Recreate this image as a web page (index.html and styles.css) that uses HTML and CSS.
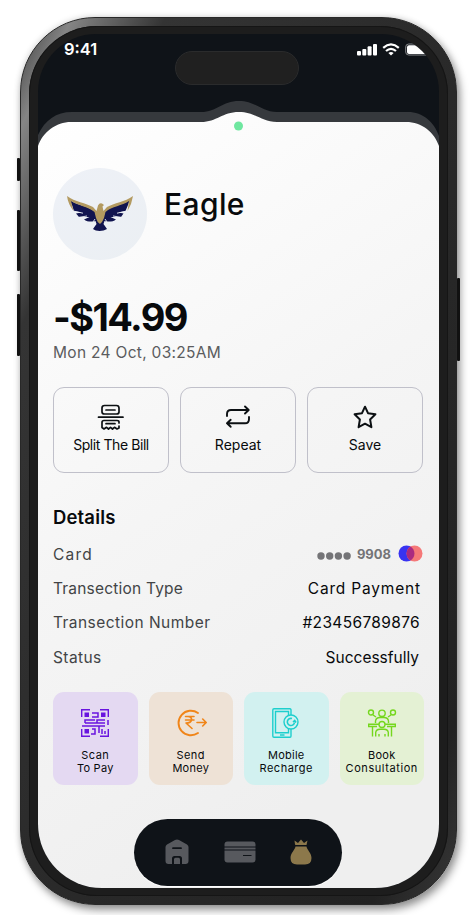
FILE: index.html
```html
<!DOCTYPE html>
<html lang="en">
<head>
<meta charset="utf-8">
<title>Transaction details</title>
<link rel="stylesheet" href="styles.css">
</head>
<body>
<div class="phone">
  <i class="key key-mute"></i><i class="key key-up"></i><i class="key key-down"></i><i class="key key-power"></i>
  <div class="bezel">
  <div class="screen">
    <svg class="sheet" viewBox="0 0 401 854">
      <defs><linearGradient id="paper" x1="0" y1="0" x2=".35" y2="1"><stop offset="0" stop-color="#fff"/><stop offset=".12" stop-color="#fdfdfd"/><stop offset=".55" stop-color="#f5f5f5"/><stop offset="1" stop-color="#efefef"/></linearGradient></defs>
      <path fill="#36393d" d="M0 101C7 86 18 78 34 78H163C179 78 184 67 201 67S223 78 239 78H370C385 78 396 88 401 102V200H0Z"/>
      <path fill="url(#paper)" d="M0 112C5 98 18 88 33 88H163C179 88 184 78 201 78S223 88 239 88H368C384 88 396 98 401 112V854H0Z"/>
      <circle cx="200.500" cy="92" r="4.500" fill="#6fe7a0"/>
    </svg>
    <header class="status">
      <span class="clock">9:41</span>
      <span class="island"></span>
      <svg class="signals" width="72" height="14" viewBox="0 0 72 14">
        <g fill="#fff"><rect x="0" y="8" width="4" height="4.500" rx="1"/><rect x="5.300" y="6" width="4" height="6.500" rx="1"/><rect x="10.600" y="3.300" width="4" height="9.200" rx="1"/><rect x="16" y="1" width="4" height="11.500" rx="1"/></g>
        <g fill="none" stroke="#fff" stroke-width="2.200"><path d="M26.200 4.800Q34 -2 41.800 4.800"/><path d="M29 8Q34 3.600 39 8"/></g>
        <path d="M31.400 10Q34 7.800 36.600 10L34 12.500Z" fill="#fff"/>
        <rect x="48.700" y="1" width="24" height="11" rx="3" fill="none" stroke="#85878a"/><path d="M52 2.300H70V11H52Q50 11 50 9V4.300Q50 2.300 52 2.300Z" fill="#fff"/>
      </svg>
    </header>
    <main class="content">
      <section class="merchant">
        <div class="avatar">
          <svg width="66" height="36" viewBox="0 0 66 36">
            <path fill="#11144f" d="M2 3C8 9 17 9 24 13L29 16H36L41 13C48 9 57 9 63 3L61 9 58.500 15 51.500 16.500 56.500 17.500 54 21 43.500 21 49 23.500C46 26 41 26 37.500 25L36.500 28 40 33C36 35.500 29 35.500 26 33L29.500 28 28.500 25C25 26 20 26 17 23.500L22.500 21 12 21 9 17.500 14.500 16.500 7 15 5 9Z"/>
            <path fill="#b39a60" d="M0 0C8 6 19 7 26 11L29.500 15 31 9.500Q32.500 6.500 35 7.500L37 9 35.500 10.500 36.500 15 40 11C47 7 58 6 66 0L64 8 60.500 15 62 5C55 10 45 10 38.500 16L37 22Q35.500 26 33 28 30 26 29 22L27.500 16C20 10 12 10 4 5L6.500 15Q1 8 0 0Z"/>
            <path d="M7 15.200L16 17.200M12 21.300L20 20M59 15.200L50 17.200M54 21.300L46 20M28 23L26 26M38 23L40 26" stroke="#edf1f5" stroke-width=".9"/>
          </svg>
        </div>
        <h1 class="name">Eagle</h1>
      </section>
      <div class="amount">-$14.99</div>
      <div class="date">Mon 24 Oct, 03:25AM</div>
      <div class="actions">
        <button class="action">
          <svg width="28" height="28" viewBox="0 0 28 28" fill="none" stroke="#0c1013" stroke-width="1.700" stroke-linecap="round" stroke-linejoin="round"><path d="M7.500 2.500H19.500Q22 2.500 22 5V9Q22 11 19.500 11H7.500Q5 11 5 9V5Q5 2.500 7.500 2.500ZM9 7H18M1.500 14.200H26M22 20V19Q22 17.500 20 17.500H7Q5 17.500 5 19.500V24.500L7 26 9.500 24.300 11.500 26 13.500 24.300 15.500 26 17.500 24.300 20 26 22 25V23M9 20.700H18"/></svg>
          <span class="l-split">Split The Bill</span>
        </button>
        <button class="action">
          <svg width="28" height="28" viewBox="0 0 28 28" fill="none" stroke="#0c1013" stroke-width="1.900" stroke-linecap="round" stroke-linejoin="round"><path d="M3 13V11Q3 7 7 7H24.500M21 3.500L24.700 7 21 10.500M25 14V16Q25 20.300 21 20.300H3M6.700 16.800L3 20.300 6.700 23.800"/></svg>
          <span class="l-repeat">Repeat</span>
        </button>
        <button class="action">
          <svg width="28" height="28" viewBox="0 0 28 28" fill="none" stroke="#0c1013" stroke-width="2" stroke-linejoin="round"><path d="M14 3.700L17 10.200 24.400 11.300 19.100 16.500 20.400 24.200 14 20.700 7.600 24.200 8.900 16.500 3.600 11.300 11 10.200Z"/></svg>
          <span class="l-save">Save</span>
        </button>
      </div>
      <h2 class="heading">Details</h2>
      <dl class="details">
        <div class="row"><dt class="k-card">Card</dt><dd class="card"><svg width="34" height="9" viewBox="0 0 34 9" fill="#747477"><circle cx="4" cy="5" r="3.700"/><circle cx="12.700" cy="5" r="3.700"/><circle cx="21.400" cy="5" r="3.700"/><circle cx="30.100" cy="5" r="3.700"/></svg><span class="digits">9908</span><svg class="brand" width="25" height="17" viewBox="0 0 25 17"><circle cx="8.500" cy="8.500" r="8" fill="#3833f2"/><circle cx="16.500" cy="8.500" r="8" fill="#f57878"/><path d="M12.500 1.600A8 8 0 0 1 12.500 15.400 8 8 0 0 1 12.500 1.600Z" fill="#aa2a80"/></svg></dd></div>
        <div class="row"><dt class="k-type">Transection Type</dt><dd class="v-type">Card Payment</dd></div>
        <div class="row"><dt class="k-number">Transection Number</dt><dd class="v-number">#23456789876</dd></div>
        <div class="row"><dt class="k-status">Status</dt><dd class="v-status">Successfully</dd></div>
      </dl>
      <div class="tiles">
        <div class="tile scan">
          <svg width="30" height="30" viewBox="0 0 30 30" fill="none" stroke="#6914df" stroke-width="1.400"><path d="M1.700 9V1.700H10M20 1.700H28.300V9M28.300 21V28.300H20M10 28.300H1.700V21"/><path fill="#6914df" stroke="none" d="M4.500 4.500H9V9H4.500ZM21 4.500H25.500V9H21ZM4.500 21H9V25.500H4.500Z"/><path d="M12 5H18V9H12M5 15V12H15M5 15H17V12H25M25 15H14M28 12V17M2 18H15M19 18V25M15 18H25M12 21H15V26H11M22 21V26M25 23V26" stroke-width="1.500"/></svg>
          <span class="t-scan">Scan</span><span class="t-pay">To Pay</span>
        </div>
        <div class="tile send">
          <svg width="32" height="30" viewBox="0 0 32 30" fill="none" stroke="#f08519" stroke-width="1.900" stroke-linecap="round" stroke-linejoin="round"><path d="M23 5A12.300 12.300 0 1 0 23 25"/><path d="M10.500 8.500H19M10.500 12H19M11 8.500H13Q17 9 16.500 12 16 15 11 15L17 20.500M22 14.500H31M27.700 11L31.200 14.500 27.700 18" stroke-width="1.600"/></svg>
          <span class="t-send">Send</span><span class="t-money">Money</span>
        </div>
        <div class="tile mobile">
          <svg width="30" height="30" viewBox="0 0 30 30" fill="none" stroke="#1dcfcd" stroke-width="1.400"><path d="M20 7V2Q20 .8 19 .8H3Q1.800 .8 1.800 2V28Q1.800 29.200 3 29.200H19Q20 29.200 20 28V21M17.500 7.500V3.500H4.500V24.700H17.500V20.500M9 27H13.500"/><circle cx="20" cy="14" r="7"/><path d="M21 10.500A3.600 3.600 0 1 0 23.500 14.500M22 14L23.700 12.500 25 14.500" stroke-width="1.600"/></svg>
          <span class="t-mobile">Mobile</span><span class="t-recharge">Recharge</span>
        </div>
        <div class="tile book">
          <svg width="30" height="30" viewBox="0 0 30 30" fill="none" stroke="#75d71e" stroke-width="1.400"><circle cx="15" cy="5.300" r="3.200"/><circle cx="4" cy="4.500" r="2.500"/><circle cx="26" cy="4.500" r="2.500"/><circle cx="15" cy="16.500" r="3"/><path d="M8.500 15V13Q9 9.500 13 9.500H17Q21 9.500 21.500 13V15M6 7L9 9M24 7L21 9M12 16.200H1.700V18.500H10M18 16.200H28.300V18.500H20M5.500 18.500V28.500M24.500 18.500V28.500M8.700 28.500V24.500Q9 21.200 13 21.200H17Q21 21.200 21.300 24.500V28.500M12 26V28.500M18 26V28.500"/></svg>
          <span class="t-book">Book</span><span class="t-consult">Consultation</span>
        </div>
      </div>
    </main>
    <nav class="nav">
      <svg width="24" height="26" viewBox="0 0 24 26"><path fill="#57595e" d="M10 1Q12 0 14 1L22 5.500Q23.500 6.500 23.500 8V22Q23.500 25 20.500 25H17V19.500Q17 17 14.500 17H9.500Q7 17 7 19.500V25H3.500Q.5 25 .5 22V8Q.5 6.500 2 5.500ZM9 25V20.500Q9 18.800 10.500 18.800H13.500Q15 18.800 15 20.500V25Z"/><path d="M8 9.200H16" stroke="#0f1318" stroke-width="1.800" stroke-linecap="round"/></svg>
      <svg width="32" height="22" viewBox="0 0 32 22"><rect x=".5" y=".5" width="31" height="21" rx="3" fill="#57595e"/><path d="M0 6H32M0 9H32M19 14.500H27.500" stroke="#0f1318" stroke-width="1.100"/></svg>
      <svg width="22" height="26" viewBox="0 0 22 26" fill="#8c784b"><path d="M5 5.500L4.500 1.500 8 4 11 .5 14 4 17.500 1.500 16.500 6H5.500ZM5.500 7.500H16.500C17 11 21.500 14 21.500 19Q21.500 25.500 15 25.500H7Q.5 25.500 .5 19C.5 14 5 11 5.500 7.500Z"/></svg>
    </nav>
  </div>
  </div>
</div>
</body>
</html>
```
FILE: styles.css
```css
* { box-sizing: border-box; margin: 0; }
html, body { width: 476px; height: 915px; overflow: hidden; background: #fff; }
body { font-family: Inter, "Liberation Sans", sans-serif; color: #080a0c; }
.phone { position: relative; margin: 17px 0 0 20px; width: 437px; height: 888px; padding: 8px; border-radius: 75px;
  background: linear-gradient(115deg, #3c3c3c 0, #858585 6%, #606060 11%, #343434 17%, #292929 55%, #222 90%, #383838 100%);
  border: 1px solid #282828; box-shadow: 3px 5px 9px rgba(0,0,0,.4), 0 0 7px rgba(0,0,0,.14); }
.bezel { height: 100%; padding: 8px 8px 8px 9px; border-radius: 68px; background: #1d1d1d; box-shadow: inset 0 0 0 1px #151515; }
.screen { position: relative; width: 401px; height: 854px; overflow: hidden; border-radius: 58px 58px 64px 64px; background: #0f1318; display: flex; flex-direction: column; align-items: center; }
.key { position: absolute; width: 3px; background: #111; left: -4px; border-radius: 1px; }
.key-mute { top: 140px; height: 23px; }
.key-up { top: 192px; height: 61px; }
.key-down { top: 276px; height: 62px; }
.key-power { left: 436px; top: 260px; height: 83px; }
.sheet { position: absolute; left: 0; top: 0; width: 401px; height: 854px; }
.status { position: relative; width: 401px; height: 134px; flex: none; display: flex; align-items: flex-start; padding-left: 26px; }
.clock { width: 111px; color: #fff; font-weight: 600; font-size: 16.500px; line-height: 20px; padding-top: 5px; }
.island { width: 124px; height: 34px; margin-top: 17px; border-radius: 17px; background: #202020; border: 1px solid #2a2b2c; }
.signals { margin: 9px 0 0 58px; flex: none; }
.content { position: relative; width: 371px; display: flex; flex-direction: column; }
.merchant { height: 92px; display: flex; }
.avatar { width: 94px; height: 92px; border-radius: 50%; background: linear-gradient(145deg, #eef1f7, #ebeff3); display: flex; align-items: center; justify-content: center; }
.name { margin: 17px 0 0 17px; font-size: 30px; line-height: 38px; font-weight: 500; letter-spacing: .4px; white-space: nowrap; }
.amount { margin-top: 34px; font-size: 38px; line-height: 46px; height: 46px; font-weight: 700; letter-spacing: -1.600px; white-space: nowrap; }
.date { height: 22px; margin-top: 2px; font-size: 15.500px; line-height: 22px; letter-spacing: .300px; color: #5b5c5e; white-space: nowrap; }
.actions { margin-top: 23px; display: grid; grid-template-columns: repeat(3, 116px); gap: 11px; }
.action { height: 86px; border: 1px solid #c0c0ca; border-radius: 11px; background: transparent; padding: 15px 0 0; display: flex; flex-direction: column; align-items: center; justify-content: flex-start; font: 400 14px/18px Inter, sans-serif; color: #080a0c; white-space: nowrap; }
.action span { margin-top: 5px; }
.l-split { letter-spacing: -.420px; }
.heading { margin-top: 32px; font-size: 18.500px; line-height: 24px; font-weight: 600; letter-spacing: .150px; align-self: flex-start; }
.details { margin-top: 8px; }
.row { height: 34.300px; width: 367px; display: flex; justify-content: space-between; align-items: center; font-size: 15.500px; white-space: nowrap; }
.row dt { color: #424446; }
.k-card { letter-spacing: 1.200px; }
.k-type { letter-spacing: .200px; }
.k-number { letter-spacing: .450px; }
.k-status { letter-spacing: .400px; }
.v-type { letter-spacing: .800px; margin-right: -.8px; }
.v-number { letter-spacing: .350px; }
.v-status { margin-right: 1px; }
.card { display: flex; align-items: center; margin-right: -3px; color: #747477; }
.card svg:first-child { margin-top: 3px; }
.digits { margin: -1px 7px 0 6px; font-size: 13px; font-weight: 700; }
.brand { margin-top: -2px; }
.tiles { margin-top: 17.500px; display: grid; grid-template-columns: repeat(4, 84.500px); gap: 11px; }
.tile { height: 93.500px; border-radius: 11px; padding-top: 16px; display: flex; flex-direction: column; align-items: center; font-size: 11px; line-height: 13px; white-space: nowrap; }
.tile svg { height: 30px; flex: none; margin-bottom: 11px; }
.t-scan, .t-send, .t-recharge { letter-spacing: .500px; }
.t-pay, .t-money, .t-mobile, .t-book { letter-spacing: .250px; }
.t-consult { letter-spacing: .580px; }
.scan { background: #e4d9f2; }
.send { background: #eee2d6; }
.mobile { background: #d2f1f0; }
.book { background: #e4f1d4; }
.nav { position: absolute; left: 96px; top: 785px; width: 208px; height: 66.500px; border-radius: 34px; background: #0f1318; box-shadow: 0 1px 1px #fff; display: flex; align-items: center; justify-content: space-between; padding: 0 30px 0 31px; }
```
